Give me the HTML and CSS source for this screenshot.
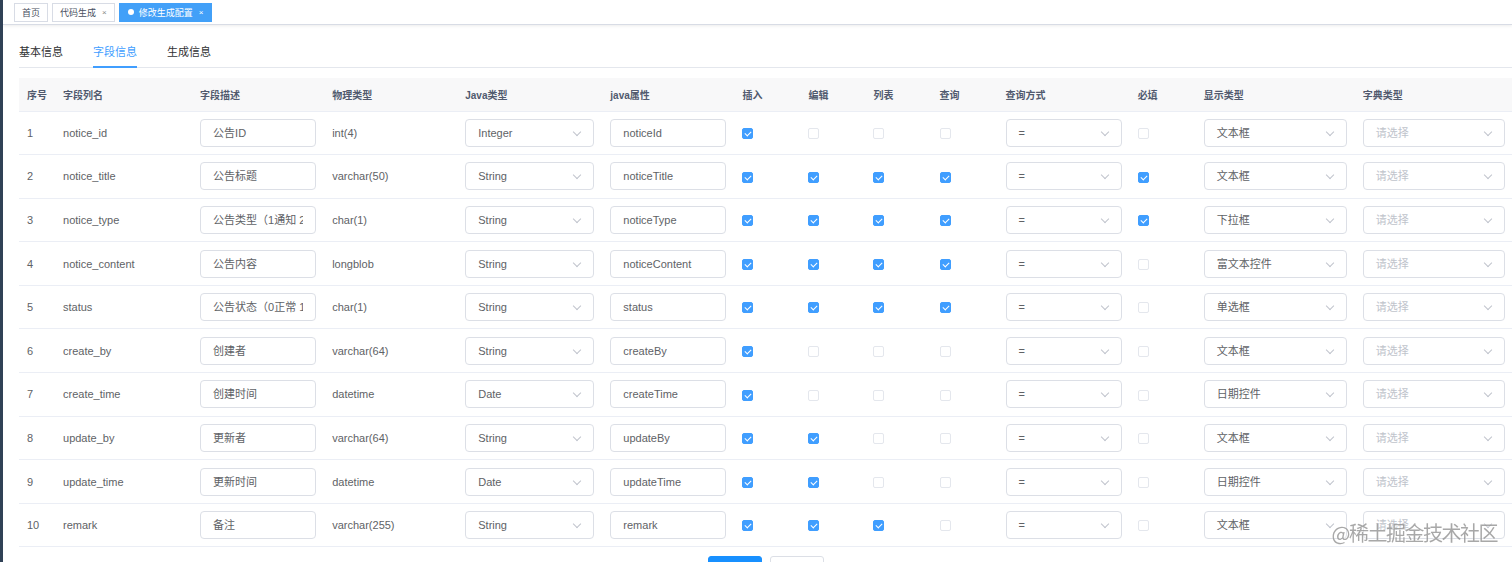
FILE: index.html
```html
<!DOCTYPE html>
<html lang="zh-CN">
  <head>
    <meta charset="UTF-8" />
    <meta name="viewport" content="width=device-width, initial-scale=1.0" />
    <title>修改生成配置</title>
    <link rel="stylesheet" href="styles.css">
  </head>
  <body>
    <div class="app">
      <div class="sidebar"></div>
      <div class="main">
        <div class="tags-view">
          <span class="tag">首页</span>
          <span class="tag">代码生成 <i class="close">×</i></span>
          <span class="tag active"><b class="dot"></b>修改生成配置 <i class="close">×</i></span>
        </div>

        <div class="content">
          <div class="tabs">
            <div class="tab">基本信息</div>
            <div class="tab active">字段信息</div>
            <div class="tab">生成信息</div>
          </div>

          <table class="column-table">
            <colgroup>
              <col style="width: 36px" />
              <col style="width: 137px" />
              <col style="width: 132px" />
              <col style="width: 133px" />
              <col style="width: 145px" />
              <col style="width: 132px" />
              <col style="width: 66px" />
              <col style="width: 65px" />
              <col style="width: 66px" />
              <col style="width: 66px" />
              <col style="width: 132px" />
              <col style="width: 66px" />
              <col style="width: 159px" />
              <col style="width: 158px" />
            </colgroup>
            <thead>
              <tr>
                <th>序号</th>
                <th>字段列名</th>
                <th>字段描述</th>
                <th>物理类型</th>
                <th>Java类型</th>
                <th>java属性</th>
                <th>插入</th>
                <th>编辑</th>
                <th>列表</th>
                <th>查询</th>
                <th>查询方式</th>
                <th>必填</th>
                <th>显示类型</th>
                <th>字典类型</th>
              </tr>
            </thead>
            <tbody>
              <tr>
                <td>1</td>
                <td>notice_id</td>
                <td><div class="field">公告ID</div></td>
                <td>int(4)</td>
                <td><div class="field select">Integer</div></td>
                <td><div class="field">noticeId</div></td>
                <td><span class="cb on"></span></td>
                <td><span class="cb"></span></td>
                <td><span class="cb"></span></td>
                <td><span class="cb"></span></td>
                <td><div class="field select">=</div></td>
                <td><span class="cb"></span></td>
                <td><div class="field select">文本框</div></td>
                <td><div class="field select placeholder">请选择</div></td>
              </tr>
              <tr>
                <td>2</td>
                <td>notice_title</td>
                <td><div class="field">公告标题</div></td>
                <td>varchar(50)</td>
                <td><div class="field select">String</div></td>
                <td><div class="field">noticeTitle</div></td>
                <td><span class="cb on"></span></td>
                <td><span class="cb on"></span></td>
                <td><span class="cb on"></span></td>
                <td><span class="cb on"></span></td>
                <td><div class="field select">=</div></td>
                <td><span class="cb on"></span></td>
                <td><div class="field select">文本框</div></td>
                <td><div class="field select placeholder">请选择</div></td>
              </tr>
              <tr>
                <td>3</td>
                <td>notice_type</td>
                <td><div class="field"><span class="val">公告类型（1通知 2公告）</span></div></td>
                <td>char(1)</td>
                <td><div class="field select">String</div></td>
                <td><div class="field">noticeType</div></td>
                <td><span class="cb on"></span></td>
                <td><span class="cb on"></span></td>
                <td><span class="cb on"></span></td>
                <td><span class="cb on"></span></td>
                <td><div class="field select">=</div></td>
                <td><span class="cb on"></span></td>
                <td><div class="field select">下拉框</div></td>
                <td><div class="field select placeholder">请选择</div></td>
              </tr>
              <tr>
                <td>4</td>
                <td>notice_content</td>
                <td><div class="field">公告内容</div></td>
                <td>longblob</td>
                <td><div class="field select">String</div></td>
                <td><div class="field">noticeContent</div></td>
                <td><span class="cb on"></span></td>
                <td><span class="cb on"></span></td>
                <td><span class="cb on"></span></td>
                <td><span class="cb on"></span></td>
                <td><div class="field select">=</div></td>
                <td><span class="cb"></span></td>
                <td><div class="field select">富文本控件</div></td>
                <td><div class="field select placeholder">请选择</div></td>
              </tr>
              <tr>
                <td>5</td>
                <td>status</td>
                <td><div class="field"><span class="val">公告状态（0正常 1关闭）</span></div></td>
                <td>char(1)</td>
                <td><div class="field select">String</div></td>
                <td><div class="field">status</div></td>
                <td><span class="cb on"></span></td>
                <td><span class="cb on"></span></td>
                <td><span class="cb on"></span></td>
                <td><span class="cb on"></span></td>
                <td><div class="field select">=</div></td>
                <td><span class="cb"></span></td>
                <td><div class="field select">单选框</div></td>
                <td><div class="field select placeholder">请选择</div></td>
              </tr>
              <tr>
                <td>6</td>
                <td>create_by</td>
                <td><div class="field">创建者</div></td>
                <td>varchar(64)</td>
                <td><div class="field select">String</div></td>
                <td><div class="field">createBy</div></td>
                <td><span class="cb on"></span></td>
                <td><span class="cb"></span></td>
                <td><span class="cb"></span></td>
                <td><span class="cb"></span></td>
                <td><div class="field select">=</div></td>
                <td><span class="cb"></span></td>
                <td><div class="field select">文本框</div></td>
                <td><div class="field select placeholder">请选择</div></td>
              </tr>
              <tr>
                <td>7</td>
                <td>create_time</td>
                <td><div class="field">创建时间</div></td>
                <td>datetime</td>
                <td><div class="field select">Date</div></td>
                <td><div class="field">createTime</div></td>
                <td><span class="cb on"></span></td>
                <td><span class="cb"></span></td>
                <td><span class="cb"></span></td>
                <td><span class="cb"></span></td>
                <td><div class="field select">=</div></td>
                <td><span class="cb"></span></td>
                <td><div class="field select">日期控件</div></td>
                <td><div class="field select placeholder">请选择</div></td>
              </tr>
              <tr>
                <td>8</td>
                <td>update_by</td>
                <td><div class="field">更新者</div></td>
                <td>varchar(64)</td>
                <td><div class="field select">String</div></td>
                <td><div class="field">updateBy</div></td>
                <td><span class="cb on"></span></td>
                <td><span class="cb on"></span></td>
                <td><span class="cb"></span></td>
                <td><span class="cb"></span></td>
                <td><div class="field select">=</div></td>
                <td><span class="cb"></span></td>
                <td><div class="field select">文本框</div></td>
                <td><div class="field select placeholder">请选择</div></td>
              </tr>
              <tr>
                <td>9</td>
                <td>update_time</td>
                <td><div class="field">更新时间</div></td>
                <td>datetime</td>
                <td><div class="field select">Date</div></td>
                <td><div class="field">updateTime</div></td>
                <td><span class="cb on"></span></td>
                <td><span class="cb on"></span></td>
                <td><span class="cb"></span></td>
                <td><span class="cb"></span></td>
                <td><div class="field select">=</div></td>
                <td><span class="cb"></span></td>
                <td><div class="field select">日期控件</div></td>
                <td><div class="field select placeholder">请选择</div></td>
              </tr>
              <tr>
                <td>10</td>
                <td>remark</td>
                <td><div class="field">备注</div></td>
                <td>varchar(255)</td>
                <td><div class="field select">String</div></td>
                <td><div class="field">remark</div></td>
                <td><span class="cb on"></span></td>
                <td><span class="cb on"></span></td>
                <td><span class="cb on"></span></td>
                <td><span class="cb"></span></td>
                <td><div class="field select">=</div></td>
                <td><span class="cb"></span></td>
                <td><div class="field select">文本框</div></td>
                <td><div class="field select placeholder">请选择</div></td>
              </tr>
            </tbody>
          </table>

          <div class="footer">
            <button class="btn btn-primary">提交</button>
            <button class="btn">返回</button>
          </div>
        </div>
      </div>
    </div>

    <div class="watermark">@稀土掘金技术社区</div>
  </body>
</html>
```

FILE: styles.css
```css
* {
  box-sizing: border-box;
}

body {
  margin: 0;
  background-color: #fff;
  font-family: "Liberation Sans", "Noto Sans CJK SC", sans-serif;
  color: #606266;
  overflow: hidden;
}

.app {
  display: flex;
  height: 100vh;
}

.sidebar {
  width: 3px;
  flex-shrink: 0;
  background-color: #304156;
}

.main {
  flex: 1;
  min-width: 0;
  overflow: hidden;
}

/* tags bar */
.tags-view {
  height: 25px;
  display: flex;
  align-items: center;
  gap: 4px;
  padding-left: 11px;
  border-bottom: 1px solid #d8dce5;
  box-shadow: 0 1px 3px rgba(0, 0, 0, 0.08);
}

.tag {
  display: flex;
  align-items: center;
  height: 19px;
  padding: 0 7px;
  border: 1px solid #d8dce5;
  font-size: 9px;
  color: #495060;
  background-color: #fff;
}

.tag .close {
  font-style: normal;
  font-size: 8px;
  color: #888;
  margin-left: 6px;
}

.tag.active {
  background-color: #42a0f8;
  border-color: #42a0f8;
  color: #fff;
  padding: 0 8px;
}

.tag.active .close {
  color: #fff;
}

.tag .dot {
  width: 6px;
  height: 6px;
  border-radius: 50%;
  background-color: #fff;
  margin-right: 5px;
}

/* content */
.content {
  padding: 13px 0 0 16px;
}

.tabs {
  display: flex;
  width: 1494px;
  border-bottom: 1px solid #e4e7ed;
}

.tab {
  height: 30px;
  line-height: 29px;
  font-size: 11px;
  color: #303133;
  border-bottom: 2px solid transparent;
  margin-bottom: -1px;
}

.tab + .tab {
  margin-left: 30px;
}

.tab.active {
  color: #409eff;
  border-bottom-color: #409eff;
}

/* table */
.column-table {
  margin-top: 10px;
  width: 1494px;
  table-layout: fixed;
  border-collapse: collapse;
  font-size: 11px;
}

.column-table th {
  height: 33px;
  padding: 0 8px;
  text-align: left;
  font-size: 10px;
  font-weight: 600;
  color: #515a6e;
  background-color: #f8f8f9;
  border-bottom: 1px solid #ebeef5;
  white-space: nowrap;
}

.column-table td {
  height: 43.6px;
  padding: 0 8px;
  border-bottom: 1px solid #ebeef5;
  white-space: nowrap;
  overflow: hidden;
}

.field {
  position: relative;
  height: 28px;
  line-height: 26px;
  padding: 0 12px;
  border: 1px solid #dcdfe6;
  border-radius: 4px;
  font-size: 11px;
  color: #606266;
  background-color: #fff;
  white-space: nowrap;
  overflow: hidden;
}

.field .val {
  display: block;
  overflow: hidden;
}

.select {
  padding-right: 28px;
}

.select::after {
  content: "";
  position: absolute;
  right: 13px;
  top: 9px;
  width: 5px;
  height: 5px;
  border-right: 1px solid #c0c4cc;
  border-bottom: 1px solid #c0c4cc;
  transform: rotate(45deg);
}

.placeholder {
  color: #c0c4cc;
}

.cb {
  position: relative;
  display: inline-block;
  width: 11px;
  height: 11px;
  vertical-align: middle;
  border: 1px solid #e4e7ed;
  border-radius: 2px;
  background-color: #fff;
}

.cb.on {
  background-color: #409eff;
  border-color: #409eff;
}

.cb.on::after {
  content: "";
  position: absolute;
  left: 3px;
  top: 1px;
  width: 3px;
  height: 5px;
  border-right: 1px solid #fff;
  border-bottom: 1px solid #fff;
  transform: rotate(45deg);
}

/* footer buttons */
.footer {
  width: 1494px;
  display: flex;
  justify-content: center;
  gap: 8px;
  margin-top: 9px;
}

.btn {
  width: 54px;
  height: 28px;
  border: 1px solid #dcdfe6;
  border-radius: 3px;
  background-color: #fff;
  font-size: 11px;
  color: #606266;
  font-family: inherit;
}

.btn-primary {
  background-color: #1890ff;
  border-color: #1890ff;
  color: #fff;
}

.watermark {
  position: fixed;
  right: 15px;
  bottom: 17px;
  font-size: 20px;
  line-height: 24px;
  color: rgba(110, 110, 110, 0.6);
  text-shadow: 0 0 2px rgba(255, 255, 255, 0.9);
  font-family: "Noto Sans CJK SC", sans-serif;
  letter-spacing: -1.5px;
}
```
